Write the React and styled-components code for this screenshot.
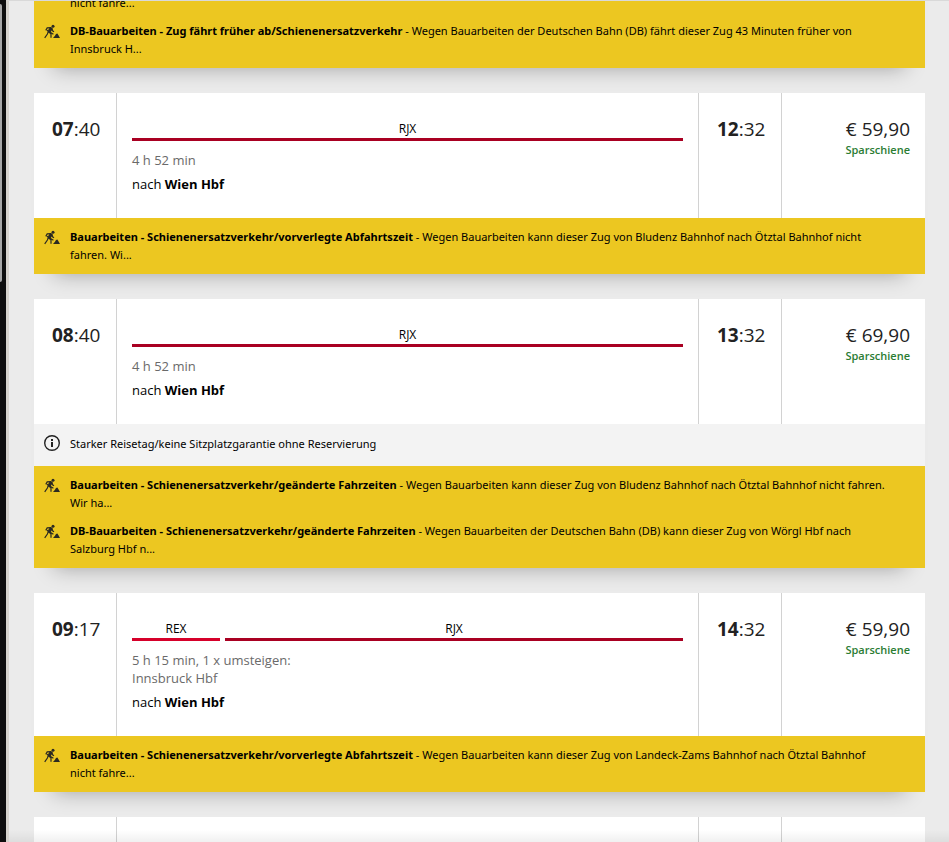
import React, { useLayoutEffect, useRef } from 'react';
import styled, { createGlobalStyle } from 'styled-components';

const GlobalStyle = createGlobalStyle`
  * {
    box-sizing: border-box;
  }
  body {
    margin: 0;
    font-family: "Open Sans", "Noto Sans", sans-serif;
    font-size: 12px;
    line-height: 18px;
    color: #000;
    background: #ebebeb;
  }
`;

const Page = styled.div`
  display: flex;
  height: 100vh;
  background: #0e0e0e;
`;

const Track = styled.div`
  width: 6px;
  padding-top: 4px;
`;

const Thumb = styled.div`
  width: 2px;
  height: 33vh;
  background: #a6a6a6;
  border-radius: 0 2px 2px 0;
`;

const Screen = styled.div`
  flex: 1;
  min-width: 0;
  position: relative;
  display: flex;
  border-left: 3px solid #d6d3cd;
  border-top: 1px solid #d9d9d9;
  background: #ebebeb;

  &::after {
    content: "";
    position: absolute;
    left: 0;
    right: 0;
    bottom: 0;
    height: 12px;
    background: linear-gradient(to bottom, rgba(0, 0, 0, 0), rgba(0, 0, 0, 0.06));
    pointer-events: none;
  }
`;

const List = styled.main`
  flex: 1;
  min-width: 0;
  display: flex;
  flex-direction: column;
  gap: 25px;
  padding: 25px 24px 25px 25px;
  overflow-y: auto;
  scrollbar-width: none;
`;

const Card = styled.article`
  flex-shrink: 0;
  box-shadow: 0 20px 20px -20px rgba(0, 0, 0, 0.32);
`;

const Body = styled.div`
  display: grid;
  grid-template-columns: 82px 1fr 83px 144px;
  background: #fff;
`;

const Cell = styled.div`
  padding: 25px 15px;
  border-left: 1px solid #d2d2d2;
`;

const TimeCell = styled(Cell)`
  padding: 25px 0 25px 18px;

  &:first-child {
    border-left: 0;
  }
`;

const PriceCell = styled(Cell)`
  text-align: right;
`;

const Time = styled.time`
  display: block;
  font-size: 19px;
  line-height: 23px;
  color: #222;
  white-space: nowrap;
`;

const Rail = styled.div`
  display: flex;
  gap: 5px;
  margin-bottom: 10px;
`;

const Segment = styled.div`
  flex: ${(props) => props.$share} 1 0;
  height: 23px;
  padding-top: 2px;
  text-align: center;
  border-bottom: 3px solid ${(props) => (props.$type === "REX" ? "#d6002a" : "#a90022")};
`;

const Duration = styled.p`
  margin: 0 0 6px;
  font-size: 13px;
  color: #6a6a6a;
`;

const Target = styled.p`
  margin: 0;
  font-size: 13px;
`;

const Price = styled.div`
  font-size: 19px;
  line-height: 23px;
  color: #222;
  white-space: nowrap;
`;

const Tariff = styled.div`
  font-size: 11px;
  font-weight: 600;
  color: #2b7c33;
`;

const Hints = styled.ul`
  list-style: none;
  margin: 0;
  padding: ${(props) => (props.$info ? "11px 34px 13px 10px" : "10px 34px 10px 10px")};
  display: flex;
  flex-direction: column;
  gap: 10px;
  font-family: "Noto Sans", "Open Sans", sans-serif;
  font-size: 11px;
  background: ${(props) => (props.$info ? "#f3f3f3" : "#ecc721")};
`;

const Hint = styled.li`
  display: grid;
  grid-template-columns: 16px 1fr;
  column-gap: 10px;
`;

const WorkerIcon = () => (
  <svg width="16" height="18" viewBox="0 0 16 18" aria-hidden="true" fill="#2b2a22">
    <circle cx="9" cy="4.2" r="1.5" />
    <path d="M6.4 5 8.6 5.8 8.2 8 6 11 3.6 10 4.8 6.8z" />
    <path
      d="M7 5.6 3.2 5.9 1.8 8.4M4.2 9.8 3.4 12 .7 15.8M5 10.2 7 12.2 7 15.8M3 8.2 9.4 12.2M7.8 6.6 8.8 9 10 9.8"
      fill="none"
      stroke="#2b2a22"
      strokeWidth="1.2"
    />
    <path d="M9 16 10.8 14 12 12 13.4 11.6 14.6 13.6 16 16z" />
  </svg>
);

const InfoIcon = () => (
  <svg width="16" height="16" viewBox="0 0 16 16" aria-hidden="true">
    <circle cx="8" cy="8" r="7.3" fill="none" stroke="#222" strokeWidth="1.4" />
    <path d="M7 4h2v2H7zM7 7h2v5H7z" fill="#222" />
  </svg>
);

const connections = [
  {
    id: 1,
    from: "06:40",
    to: "11:32",
    price: "59,90",
    duration: ["4 h 52 min"],
    segments: [{ type: "RJX", share: 1 }],
    works: [
      {
        title: "Bauarbeiten - Schienenersatzverkehr/vorverlegte Abfahrtszeit",
        text: "Wegen Bauarbeiten kann dieser Zug von Landeck-Zams Bahnhof nach Ötztal Bahnhof nicht fahre...",
      },
      {
        title: "DB-Bauarbeiten - Zug fährt früher ab/Schienenersatzverkehr",
        text: "Wegen Bauarbeiten der Deutschen Bahn (DB) fährt dieser Zug 43 Minuten früher von Innsbruck H...",
      },
    ],
  },
  {
    id: 2,
    from: "07:40",
    to: "12:32",
    price: "59,90",
    duration: ["4 h 52 min"],
    segments: [{ type: "RJX", share: 1 }],
    works: [
      {
        title: "Bauarbeiten - Schienenersatzverkehr/vorverlegte Abfahrtszeit",
        text: "Wegen Bauarbeiten kann dieser Zug von Bludenz Bahnhof nach Ötztal Bahnhof nicht fahren. Wi...",
      },
    ],
  },
  {
    id: 3,
    from: "08:40",
    to: "13:32",
    price: "69,90",
    duration: ["4 h 52 min"],
    segments: [{ type: "RJX", share: 1 }],
    info: "Starker Reisetag/keine Sitzplatzgarantie ohne Reservierung",
    works: [
      {
        title: "Bauarbeiten - Schienenersatzverkehr/geänderte Fahrzeiten",
        text: "Wegen Bauarbeiten kann dieser Zug von Bludenz Bahnhof nach Ötztal Bahnhof nicht fahren. Wir ha...",
      },
      {
        title: "DB-Bauarbeiten - Schienenersatzverkehr/geänderte Fahrzeiten",
        text: "Wegen Bauarbeiten der Deutschen Bahn (DB) kann dieser Zug von Wörgl Hbf nach Salzburg Hbf n...",
      },
    ],
  },
  {
    id: 4,
    from: "09:17",
    to: "14:32",
    price: "59,90",
    duration: ["5 h 15 min, 1 x umsteigen:", "Innsbruck Hbf"],
    segments: [{ type: "REX", share: 88 }, { type: "RJX", share: 458 }],
    works: [
      {
        title: "Bauarbeiten - Schienenersatzverkehr/vorverlegte Abfahrtszeit",
        text: "Wegen Bauarbeiten kann dieser Zug von Landeck-Zams Bahnhof nach Ötztal Bahnhof nicht fahre...",
      },
    ],
  },
  {
    id: 5,
    from: "09:40",
    to: "14:32",
    price: "59,90",
    duration: ["4 h 52 min"],
    segments: [{ type: "RJX", share: 1 }],
    works: [],
  },
];

const Clock = ({ value }) => {
  const [hours, minutes] = value.split(":");
  return (
    <Time dateTime={value}>
      <b>{hours}</b>:{minutes}
    </Time>
  );
};

const Connection = ({ item }) => (
  <Card>
    <Body>
      <TimeCell>
        <Clock value={item.from} />
      </TimeCell>
      <Cell>
        <Rail>
          {item.segments.map((segment) => (
            <Segment key={segment.type} $type={segment.type} $share={segment.share}>
              {segment.type}
            </Segment>
          ))}
        </Rail>
        <Duration>
          {item.duration.map((line, i) => (
            <React.Fragment key={line}>
              {i > 0 && <br />}
              {line}
            </React.Fragment>
          ))}
        </Duration>
        <Target>
          nach <b>Wien Hbf</b>
        </Target>
      </Cell>
      <TimeCell>
        <Clock value={item.to} />
      </TimeCell>
      <PriceCell>
        <Price>€ {item.price}</Price>
        <Tariff>Sparschiene</Tariff>
      </PriceCell>
    </Body>
    {item.info && (
      <Hints $info>
        <Hint>
          <InfoIcon />
          <span>{item.info}</span>
        </Hint>
      </Hints>
    )}
    {item.works.length > 0 && (
      <Hints>
        {item.works.map((work) => (
          <Hint key={work.title}>
            <WorkerIcon />
            <span>
              <b>{work.title}</b> - {work.text}
            </span>
          </Hint>
        ))}
      </Hints>
    )}
  </Card>
);

const App = () => {
  const listRef = useRef(null);

  // open the list scrolled past the first connection
  useLayoutEffect(() => {
    listRef.current.scrollTop = 185;
  }, []);

  return (
    <>
      <GlobalStyle />
      <Page>
        <Track>
          <Thumb />
        </Track>
        <Screen>
          <List ref={listRef}>
            {connections.map((item) => (
              <Connection key={item.id} item={item} />
            ))}
          </List>
        </Screen>
      </Page>
    </>
  );
};

export default App;
